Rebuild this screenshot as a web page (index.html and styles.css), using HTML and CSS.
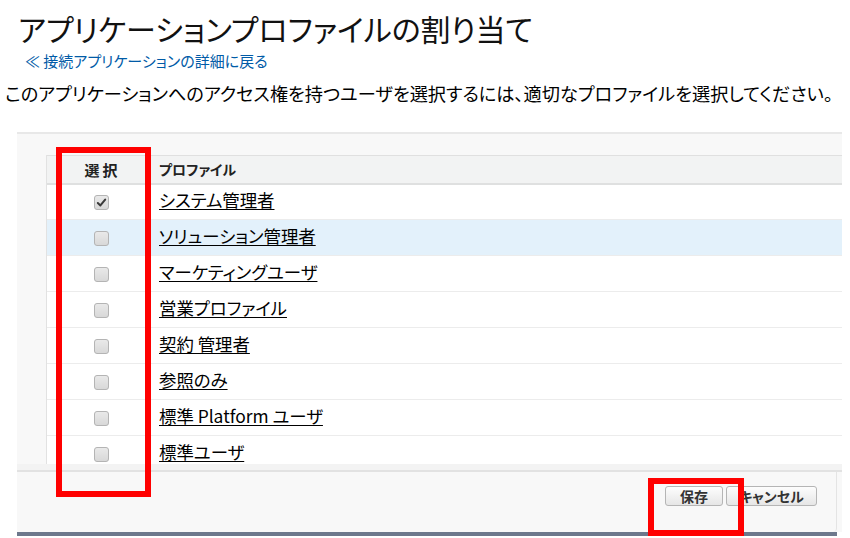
FILE: index.html
```html
<!DOCTYPE html>
<html lang="ja">
<head>
    <meta charset="UTF-8">
    <title>アプリケーションプロファイルの割り当て</title>
    <link rel="stylesheet" href="styles.css">
</head>
<body>
    <div class="page">
        <h1 class="page-title">アプリケーションプロファイルの割り当て</h1>
        <a class="back-link" href="#">≪ 接続アプリケーションの詳細に戻る</a>
        <p class="intro">このアプリケーションへのアクセス権を持つユーザを選択するには、適切なプロファイルを選択してください。</p>

        <div class="panel">
            <div class="table-wrap">
                <table class="profile-table">
                    <thead>
                        <tr>
                            <th class="col-select">選択</th>
                            <th class="col-name">プロファイル</th>
                        </tr>
                    </thead>
                    <tbody>
                        <tr>
                            <td class="col-select"><span class="cb checked"><svg viewBox="0 0 12 12" width="11" height="11"><path d="M2 6.5 L4.8 9.2 L10 2.8" fill="none" stroke="#3a3a3a" stroke-width="2.2" stroke-linecap="round" stroke-linejoin="round"/></svg></span></td>
                            <td class="col-name"><a href="#">システム管理者</a></td>
                        </tr>
                        <tr class="hover">
                            <td class="col-select"><span class="cb"></span></td>
                            <td class="col-name"><a href="#">ソリューション管理者</a></td>
                        </tr>
                        <tr>
                            <td class="col-select"><span class="cb"></span></td>
                            <td class="col-name"><a href="#">マーケティングユーザ</a></td>
                        </tr>
                        <tr>
                            <td class="col-select"><span class="cb"></span></td>
                            <td class="col-name"><a href="#">営業プロファイル</a></td>
                        </tr>
                        <tr>
                            <td class="col-select"><span class="cb"></span></td>
                            <td class="col-name"><a href="#">契約 管理者</a></td>
                        </tr>
                        <tr>
                            <td class="col-select"><span class="cb"></span></td>
                            <td class="col-name"><a href="#">参照のみ</a></td>
                        </tr>
                        <tr>
                            <td class="col-select"><span class="cb"></span></td>
                            <td class="col-name"><a href="#">標準 Platform ユーザ</a></td>
                        </tr>
                        <tr>
                            <td class="col-select"><span class="cb"></span></td>
                            <td class="col-name"><a href="#">標準ユーザ</a></td>
                        </tr>
                    </tbody>
                </table>
            </div>
            <div class="table-foot"></div>
            <div class="buttons">
                <button class="btn">保存</button>
                <button class="btn btn-wide">キャンセル</button>
            </div>
        </div>
        <div class="panel-bottom"></div>

        <div class="mark mark-column"></div>
        <div class="mark mark-save"></div>
    </div>
</body>
</html>
```

FILE: styles.css
```css
* {
    margin: 0;
    padding: 0;
    box-sizing: border-box;
}

body {
    background: #fff;
    color: #000;
    font-family: "Noto Sans CJK JP", "Noto Sans", sans-serif;
    font-feature-settings: "palt";
    overflow: hidden;
}

.page {
    position: relative;
    width: 850px;
    height: 538px;
}

.page-title {
    font-size: 30px;
    font-weight: normal;
    line-height: 32px;
    color: #111;
    padding: 12px 0 0 18px;
    height: 52px;
}

.back-link {
    display: block;
    font-size: 15px;
    line-height: 18px;
    color: #015ba7;
    text-decoration: none;
    margin-left: 25px;
    height: 29px;
}

.intro {
    font-size: 18.2px;
    line-height: 24px;
    margin-left: 5px;
    height: 51px;
    white-space: nowrap;
}

.panel {
    margin-left: 17px;
    width: 825px;
    border-top: 2px solid #e8e8e8;
    background: #f8f8f8;
    padding: 21px 0 0 29px;
}

.table-wrap {
    height: 309px;
    overflow: hidden;
    background: #fff;
    border-left: 1px solid #e2e2e2;
}

.profile-table {
    width: 100%;
    border-collapse: collapse;
}

.profile-table th {
    height: 28px;
    background: #f2f3f3;
    border-top: 1px solid #e0e0e0;
    border-bottom: 2px solid #dfe0e0;
    font-size: 14px;
    font-weight: bold;
    color: #222;
    text-align: left;
}

.profile-table td {
    height: 36px;
    padding-bottom: 3px;
    border-bottom: 1px solid #ececec;
}

.profile-table tr.hover td {
    background: #e3f1fb;
}

.col-select {
    width: 108px;
    text-align: center !important;
}

.profile-table th.col-select {
    font-size: 15px;
    letter-spacing: 3px;
    padding-left: 3px;
}

.col-name {
    padding-left: 4px;
}

.col-name a {
    color: #000;
    font-size: 17.4px;
    line-height: 22px;
    text-decoration: underline;
    text-underline-offset: 2px;
}

.cb {
    display: inline-flex;
    align-items: center;
    justify-content: center;
    width: 15px;
    height: 15px;
    vertical-align: middle;
    border: 1px solid #b4b4b4;
    border-radius: 3px;
    background: linear-gradient(#e9e9e9, #d8d8d8);
}

.table-foot {
    height: 8px;
    margin-left: -29px;
    background: #f3f3f3;
    border-bottom: 2px solid #e2e2e2;
}

.buttons {
    display: flex;
    justify-content: flex-end;
    gap: 3px;
    height: 60px;
    margin-left: -29px;
    margin-right: 5px;
    padding: 14px 19px 0 0;
    border-right: 1px solid #e4e4e4;
    border-bottom-right-radius: 4px;
}

.btn {
    height: 20px;
    width: 58px;
    font-family: "Noto Sans CJK JP", sans-serif;
    font-feature-settings: "palt";
    font-size: 14px;
    font-weight: bold;
    line-height: 18px;
    color: #333;
    background: linear-gradient(#fdfdfd, #e6e6e6);
    border: 1px solid #b5b5b5;
    border-radius: 3px;
}

.btn-wide {
    width: 91px;
}

.panel-bottom {
    margin-left: 17px;
    width: 820px;
    height: 4px;
    background: #6d788c;
}

.mark {
    position: absolute;
    border: 6px solid #ff0000;
}

.mark-column {
    left: 56px;
    top: 147px;
    width: 95px;
    height: 350px;
}

.mark-save {
    left: 648px;
    top: 478px;
    width: 96px;
    height: 58px;
}
```
